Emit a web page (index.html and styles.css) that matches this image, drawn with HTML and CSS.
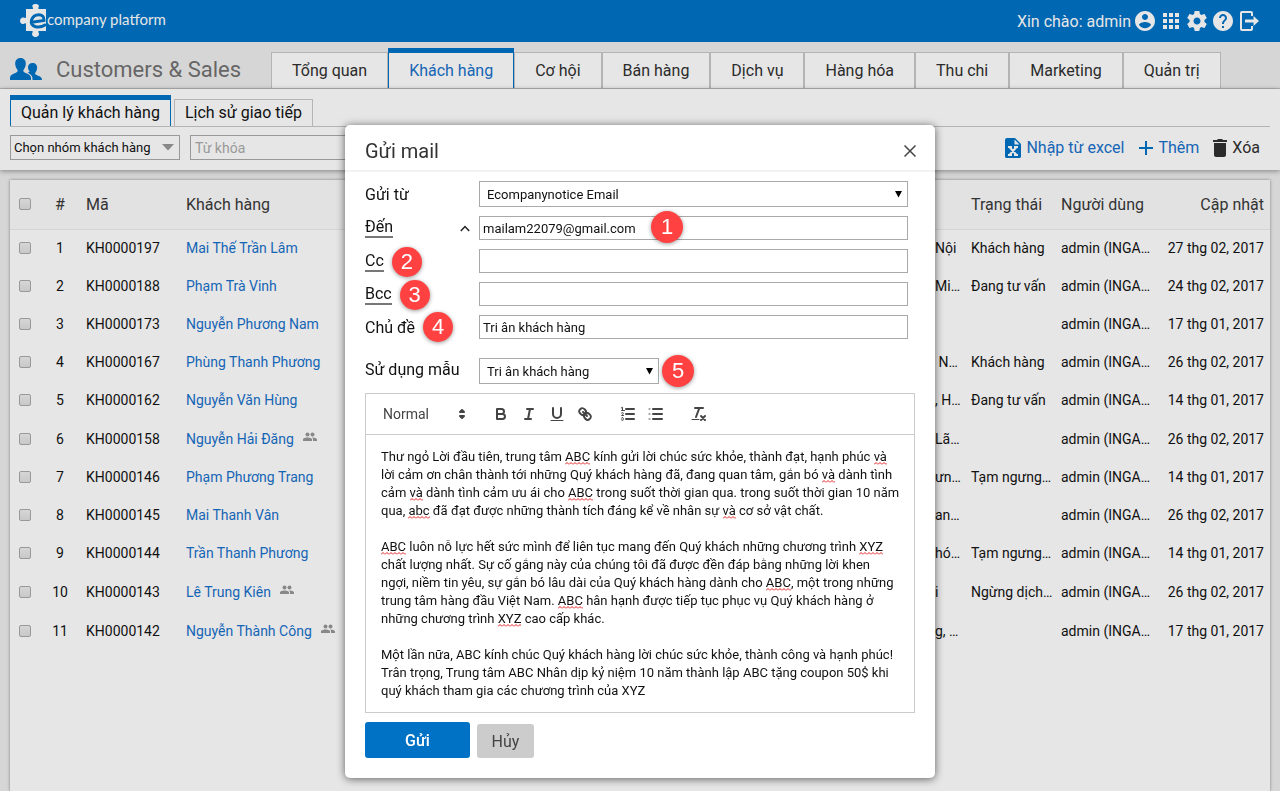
FILE: index.html
```html
<!DOCTYPE html>
<html lang="vi">
<head>
    <meta charset="UTF-8" />
    <meta name="viewport" content="width=device-width, initial-scale=1" />
    <title>Customers &amp; Sales</title>
    <link rel="stylesheet" href="styles.css">
</head>
<body>
<header class="topbar">
  <a class="logo" href="#">
    <svg width="27" height="34" viewBox="0 0 27 34">
      <path fill="#e6e6e6" d="M6 5h6.500c.8 0 .8-.8.300-1.500C11.500 1.500 13 0 15.500 0s4.300 1.500 3 3.500c-.5.700-.4 1.500.4 1.500H26v22h-7c-.8 0-1 .800-.5 1.500 1.500 2-.3 4.500-3 4.500s-4.300-2.500-3-4.500c.5-.7.300-1.500-.5-1.500H6v-7c0-.8-.8-1-1.500-.5C2.500 21 0 19.500 0 16.800s2.500-4.200 4.500-3c.7.500 1.500.3 1.500-.5z"/>
      <path fill="none" stroke="#0067b3" stroke-width="3" d="M10 18.500l14-2C24.500 8.500 14 9 11.500 16 10 23.500 19 25 26 20.500"/>
    </svg>
    <span>company platform</span>
  </a>
  <div class="user-menu">
    <span>Xin chào: admin</span>
    <button type="button" aria-label="Tài khoản">
      <svg width="24" height="24" viewBox="0 0 24 24"><path d="M12 2C6.480 2 2 6.480 2 12s4.480 10 10 10 10-4.480 10-10S17.520 2 12 2zm0 3c1.660 0 3 1.340 3 3s-1.340 3-3 3-3-1.340-3-3 1.340-3 3-3zm0 14.200c-2.500 0-4.710-1.280-6-3.220.03-1.990 4-3.080 6-3.080 1.990 0 5.970 1.090 6 3.080-1.290 1.940-3.500 3.220-6 3.220z"/></svg>
    </button>
    <button type="button" aria-label="Ứng dụng">
      <svg width="24" height="24" viewBox="0 0 24 24"><path d="M4 8h4V4H4v4zm6 12h4v-4h-4v4zm-6 0h4v-4H4v4zm0-6h4v-4H4v4zm6 0h4v-4h-4v4zm6-10v4h4V4h-4zm-6 4h4V4h-4v4zm6 6h4v-4h-4v4zm0 6h4v-4h-4v4z"/></svg>
    </button>
    <button type="button" aria-label="Cài đặt">
      <svg width="24" height="24" viewBox="0 0 24 24"><path d="M19.430 12.980c.04-.32.070-.64.070-.98s-.03-.66-.07-.98l2.110-1.650c.19-.15.240-.42.120-.64l-2-3.460c-.12-.22-.39-.3-.61-.22l-2.490 1c-.52-.4-1.080-.73-1.690-.98l-.38-2.650C14.460 2.180 14.250 2 14 2h-4c-.25 0-.46.180-.49.420l-.38 2.650c-.61.250-1.170.590-1.690.980l-2.490-1c-.23-.09-.49 0-.61.220l-2 3.460c-.13.220-.07.490.12.640l2.110 1.650c-.04.320-.07.650-.07.980s.03.660.070.980l-2.110 1.650c-.19.150-.24.420-.12.640l2 3.460c.12.220.39.300.61.220l2.490-1c.52.400 1.080.730 1.690.980l.38 2.650c.03.240.24.420.49.420h4c.25 0 .46-.18.490-.42l.38-2.650c.61-.25 1.170-.59 1.690-.98l2.490 1c.23.090.49 0 .61-.22l2-3.460c.12-.22.070-.49-.12-.64l-2.110-1.650zM12 15.500c-1.930 0-3.500-1.570-3.500-3.500s1.570-3.500 3.500-3.500 3.500 1.570 3.500 3.500-1.570 3.500-3.500 3.500z"/></svg>
    </button>
    <button type="button" aria-label="Trợ giúp">
      <svg width="24" height="24" viewBox="0 0 24 24"><path d="M12 2C6.480 2 2 6.480 2 12s4.480 10 10 10 10-4.480 10-10S17.520 2 12 2zm1 17h-2v-2h2v2zm2.070-7.750l-.9.920C13.450 12.900 13 13.500 13 15h-2v-.5c0-1.100.45-2.100 1.170-2.830l1.240-1.260c.37-.36.590-.86.590-1.410 0-1.100-.9-2-2-2s-2 .9-2 2H8c0-2.210 1.790-4 4-4s4 1.790 4 4c0 .88-.36 1.680-.93 2.250z"/></svg>
    </button>
    <button type="button" aria-label="Đăng xuất">
      <svg width="24" height="24" viewBox="0 0 24 24"><path fill="none" stroke="#e6e6e6" stroke-width="2" d="M15 7V4c0-.6-.4-1-1-1H5c-.6 0-1 .4-1 1v16c0 .6.400 1 1 1h9c.6 0 1-.4 1-1v-3"/><path d="M8 10.500h8.500V7L22 12l-5.500 5v-3.500H8z"/></svg>
    </button>
  </div>
</header>

<nav class="modules">
  <div class="module-title">
    <svg width="32" height="22" viewBox="0 0 32 22"><path d="M10.500 0c3.500 0 5.500 2.500 5.300 6-.2 2.800-1.300 4.600-2.300 6-.6 1 0 2 1.500 2.700 3.500 1.600 6 2.300 6 5.300v2H0v-2c0-3 2.500-3.700 6-5.300C7.500 14 8.100 13 7.500 12c-1-1.400-2.100-3.200-2.300-6C5 2.500 7 0 10.500 0z"/><path d="M22.500 5c3 0 4.800 2 4.600 5-.1 2.200-1 3.600-1.800 4.700-.6.900-.1 1.600 1.200 2.200 3 1.300 5.500 1.800 5.500 5.100h-9.500c.3-4-1.500-5.600-4.800-7.200 1.400-.6 2-.9 1.700-1.500-.8-1.200-1.400-2.300-1.400-3.800C17.900 7 19.700 5 22.500 5z"/></svg>
    <span>Customers &amp; Sales</span>
  </div>
  <div class="tabs">
    <a href="#">Tổng quan</a>
    <a href="#" class="active">Khách hàng</a>
    <a href="#">Cơ hội</a>
    <a href="#">Bán hàng</a>
    <a href="#">Dịch vụ</a>
    <a href="#">Hàng hóa</a>
    <a href="#">Thu chi</a>
    <a href="#">Marketing</a>
    <a href="#">Quản trị</a>
  </div>
</nav>

<section class="panel">
  <div class="subtabs">
    <a href="#" class="active">Quản lý khách hàng</a>
    <a href="#">Lịch sử giao tiếp</a>
  </div>
  <div class="filters">
    <div class="select-wrap group">
      <select aria-label="Nhóm khách hàng"><option>Chọn nhóm khách hàng</option></select>
      <svg width="12" height="7" viewBox="0 0 12 7"><path fill="#888" d="M0 0h12L6 6.500z"/></svg>
    </div>
    <input class="keyword" type="text" placeholder="Từ khóa" aria-label="Từ khóa">
    <div class="actions">
      <button type="button">
        <svg width="18" height="20" viewBox="0 0 18 20"><path fill="#0067b3" d="M3 0h8l6 6v12.500c0 .8-.7 1.500-1.500 1.500h-13C1.700 20 1 19.300 1 18.500V2c0-1.100.9-2 2-2z"/><path fill="#e6e6e6" d="M10.500 1.500v5h5z"/><path fill="none" stroke="#e6e6e6" stroke-width="2" d="M5.500 9l7 8M12.500 9l-7 8M4 9h4M10 9h4M4 17h4M10 17h4"/></svg>
        Nhập từ excel
      </button>
      <button type="button" class="add">
        <svg width="16" height="16" viewBox="0 0 16 16"><path stroke="#0067b3" stroke-width="2" d="M8 1v14M1 8h14"/></svg>
        Thêm
      </button>
      <button type="button" class="delete">
        <svg width="15" height="18" viewBox="0 0 15 18"><path fill="#2b2b2b" d="M1 4h12v12c0 1.100-.9 2-2 2H3c-1.100 0-2-.9-2-2zM0 1h4l1-1h4l1 1h4v2H0z"/></svg>
        Xóa
      </button>
    </div>
  </div>
</section>

<main class="card">
  <table>
    <colgroup>
      <col class="c-check"><col class="c-num"><col class="c-code"><col><col class="c-address"><col class="c-status"><col class="c-user"><col class="c-date">
    </colgroup>
    <thead>
      <tr><th><input type="checkbox" aria-label="Chọn tất cả"></th><th class="num">#</th><th>Mã</th><th>Khách hàng</th><th></th><th>Trạng thái</th><th>Người dùng</th><th class="date">Cập nhật</th></tr>
    </thead>
    <tbody>
      <tr><td><input type="checkbox" aria-label="KH0000197"></td><td class="num">1</td><td>KH0000197</td><td><a href="#">Mai Thế Trần Lâm</a></td><td>Nội</td><td>Khách hàng</td><td>admin (INGA…</td><td class="date">27 thg 02, 2017</td></tr>
      <tr><td><input type="checkbox" aria-label="KH0000188"></td><td class="num">2</td><td>KH0000188</td><td><a href="#">Phạm Trà Vinh</a></td><td>Mi…</td><td>Đang tư vấn</td><td>admin (INGA…</td><td class="date">24 thg 02, 2017</td></tr>
      <tr><td><input type="checkbox" aria-label="KH0000173"></td><td class="num">3</td><td>KH0000173</td><td><a href="#">Nguyễn Phương Nam</a></td><td></td><td></td><td>admin (INGA…</td><td class="date">17 thg 01, 2017</td></tr>
      <tr><td><input type="checkbox" aria-label="KH0000167"></td><td class="num">4</td><td>KH0000167</td><td><a href="#">Phùng Thanh Phương</a></td><td>&nbsp;N…</td><td>Khách hàng</td><td>admin (INGA…</td><td class="date">26 thg 02, 2017</td></tr>
      <tr><td><input type="checkbox" aria-label="KH0000162"></td><td class="num">5</td><td>KH0000162</td><td><a href="#">Nguyễn Văn Hùng</a></td><td>, H…</td><td>Đang tư vấn</td><td>admin (INGA…</td><td class="date">14 thg 01, 2017</td></tr>
      <tr class="shared"><td><input type="checkbox" aria-label="KH0000158"></td><td class="num">6</td><td>KH0000158</td><td><a href="#">Nguyễn Hải Đăng</a><svg class="people" width="14" height="10" viewBox="0 0 14 10"><circle cx="4.500" cy="2.500" r="2"/><circle cx="9.500" cy="2.500" r="2"/><path d="M0 9V7.500C0 6 3 5.500 4.500 5.500S9 6 9 7.500V9zM10 9V7.500c0-.8-.3-1.300-.8-1.900C11 5.400 14 6.200 14 7.500V9z"/></svg></td><td>Lã…</td><td></td><td>admin (INGA…</td><td class="date">26 thg 02, 2017</td></tr>
      <tr><td><input type="checkbox" aria-label="KH0000146"></td><td class="num">7</td><td>KH0000146</td><td><a href="#">Phạm Phương Trang</a></td><td>ưn…</td><td>Tạm ngưng…</td><td>admin (INGA…</td><td class="date">14 thg 01, 2017</td></tr>
      <tr><td><input type="checkbox" aria-label="KH0000145"></td><td class="num">8</td><td>KH0000145</td><td><a href="#">Mai Thanh Vân</a></td><td>an…</td><td></td><td>admin (INGA…</td><td class="date">26 thg 02, 2017</td></tr>
      <tr><td><input type="checkbox" aria-label="KH0000144"></td><td class="num">9</td><td>KH0000144</td><td><a href="#">Trần Thanh Phương</a></td><td>hó…</td><td>Tạm ngưng…</td><td>admin (INGA…</td><td class="date">14 thg 01, 2017</td></tr>
      <tr class="shared"><td><input type="checkbox" aria-label="KH0000143"></td><td class="num">10</td><td>KH0000143</td><td><a href="#">Lê Trung Kiên</a><svg class="people" width="14" height="10" viewBox="0 0 14 10"><circle cx="4.500" cy="2.500" r="2"/><circle cx="9.500" cy="2.500" r="2"/><path d="M0 9V7.500C0 6 3 5.500 4.500 5.500S9 6 9 7.500V9zM10 9V7.500c0-.8-.3-1.300-.8-1.900C11 5.400 14 6.200 14 7.500V9z"/></svg></td><td>i</td><td>Ngừng dịch…</td><td>admin (INGA…</td><td class="date">26 thg 02, 2017</td></tr>
      <tr class="shared"><td><input type="checkbox" aria-label="KH0000142"></td><td class="num">11</td><td>KH0000142</td><td><a href="#">Nguyễn Thành Công</a><svg class="people" width="14" height="10" viewBox="0 0 14 10"><circle cx="4.500" cy="2.500" r="2"/><circle cx="9.500" cy="2.500" r="2"/><path d="M0 9V7.500C0 6 3 5.500 4.500 5.500S9 6 9 7.500V9zM10 9V7.500c0-.8-.3-1.300-.8-1.900C11 5.400 14 6.200 14 7.500V9z"/></svg></td><td>g, …</td><td></td><td>admin (INGA…</td><td class="date">17 thg 01, 2017</td></tr>
    </tbody>
  </table>
</main>

<div class="overlay">
  <form class="modal" role="dialog" aria-labelledby="mailTitle">
    <div class="modal-header">
      <h2 id="mailTitle">Gửi mail</h2>
      <button type="button" class="close" aria-label="Đóng">
        <svg width="12" height="12" viewBox="0 0 12 12"><path stroke="#444" stroke-width="1.500" d="M.5.500l11 11M11.500.500l-11 11"/></svg>
      </button>
    </div>
    <div class="modal-body">
      <div class="field">
        <div class="caption"><label for="from">Gửi từ</label></div>
        <div class="select-wrap">
          <select id="from"><option>Ecompanynotice Email</option></select>
          <svg width="7" height="7" viewBox="0 0 7 7"><path d="M0 0h7L3.500 6.500z"/></svg>
        </div>
      </div>
      <div class="field">
        <div class="caption">
          <label class="link" for="to">Đến</label>
          <button type="button" class="toggle" aria-label="Thu gọn"><svg width="10" height="7" viewBox="0 0 10 7"><path fill="none" stroke="#222" stroke-width="1.500" d="M.8 6L5 1.500 9.200 6"/></svg></button>
        </div>
        <div class="control">
          <input type="text" id="to" value="mailam22079@gmail.com">
          <span class="badge badge-over">1</span>
        </div>
      </div>
      <div class="field">
        <div class="caption copy"><label class="link" for="cc">Cc</label><span class="badge">2</span></div>
        <input type="text" id="cc">
      </div>
      <div class="field">
        <div class="caption copy"><label class="link" for="bcc">Bcc</label><span class="badge">3</span></div>
        <input type="text" id="bcc">
      </div>
      <div class="field">
        <div class="caption"><label for="subject">Chủ đề</label><span class="badge">4</span></div>
        <input type="text" id="subject" value="Tri ân khách hàng">
      </div>
      <div class="field template">
        <div class="caption"><label for="template">Sử dụng mẫu</label></div>
        <div class="select-wrap">
          <select id="template"><option>Tri ân khách hàng</option></select>
          <svg width="7" height="7" viewBox="0 0 7 7"><path d="M0 0h7L3.500 6.500z"/></svg>
        </div>
        <span class="badge">5</span>
      </div>

      <div class="editor">
        <div class="toolbar">
          <div class="select-wrap">
            <select aria-label="Kiểu chữ"><option>Normal</option></select>
            <svg width="18" height="18" viewBox="0 0 18 18"><path class="both" d="M7 11l2 2 2-2zM7 7l2-2 2 2z"/></svg>
          </div>
          <div class="formats">
            <button type="button" aria-label="Đậm"><svg width="18" height="18" viewBox="0 0 18 18"><path d="M5 4h4.500a2.500 2.500 0 0 1 0 5H5zM5 9h5.500a2.500 2.500 0 0 1 0 5H5z"/></svg></button>
            <button type="button" aria-label="Nghiêng"><svg width="18" height="18" viewBox="0 0 18 18"><path d="M7 4h6M5 14h6M8 14l2-10"/></svg></button>
            <button type="button" aria-label="Gạch chân"><svg width="18" height="18" viewBox="0 0 18 18"><path d="M5 3v6a4 4 0 0 0 8 0V3"/><path class="thin" d="M3 15.500h12"/></svg></button>
            <button type="button" aria-label="Liên kết"><svg width="18" height="18" viewBox="0 0 18 18"><path d="M7 7l4 4M8.900 4.577a3.476 3.476 0 0 1 .36 4.679A3.476 3.476 0 0 1 4.577 8.900C3.185 7.500 2.035 6.400 4.217 4.217S7.500 3.185 8.900 4.577zM13.423 9.100a3.476 3.476 0 0 0-4.679-.36 3.476 3.476 0 0 0 .36 4.679c1.392 1.392 2.500 2.542 4.679.36S14.815 10.500 13.423 9.100z"/></svg></button>
          </div>
          <div class="formats">
            <button type="button" aria-label="Danh sách số"><svg width="18" height="18" viewBox="0 0 18 18"><path d="M7 4h8M7 9h8M7 14h8"/><path class="thin" d="M2.500 5.500h3M2.300 2.900l1.200-.6v3M4.500 10.500h-2c0-.234 1.850-1.076 1.850-2.234A.959.959 0 0 0 2.500 8.156M2.500 14.846a.959.959 0 0 0 1.850-.109A.7.700 0 0 0 3.750 14a.688.688 0 0 0 .6-.736.959.959 0 0 0-1.850-.109"/></svg></button>
            <button type="button" aria-label="Danh sách"><svg width="18" height="18" viewBox="0 0 18 18"><path d="M6 4h9M6 9h9M6 14h9"/><path class="thin" d="M2 4h1M2 9h1M2 14h1"/></svg></button>
          </div>
          <div class="formats">
            <button type="button" aria-label="Xóa định dạng"><svg width="18" height="18" viewBox="0 0 18 18"><path d="M5 3h8M6 12l3.350-9M11 11l4 4M15 11l-4 4"/><path class="thin" d="M2 14.500h7"/></svg></button>
          </div>
        </div>
        <div class="content" contenteditable="true" spellcheck="false">
          <p>Thư ngỏ Lời đầu tiên, trung tâm <u>ABC</u> kính gửi lời chúc sức khỏe, thành đạt, hạnh phúc <u>và</u> lời cảm ơn chân thành tới những Quý khách hàng đã, đang quan tâm, gắn bó <u>và</u> dành tình cảm <u>và</u> dành tình cảm ưu ái cho <u>ABC</u> trong suốt thời gian qua. trong suốt thời gian 10 năm qua, <u>abc</u> đã đạt được những thành tích đáng kể về nhân sự <u>và</u> cơ sở vật chất.</p>
          <p><u>ABC</u> luôn nỗ lực hết sức mình để liên tục mang đến Quý khách những chương trình <u>XYZ</u> chất lượng nhất. Sự cố gắng này của chúng tôi đã được đền đáp bằng những lời khen ngợi, niềm tin yêu, sự gắn bó lâu dài của Quý khách hàng dành cho <u>ABC</u>, một trong những trung tâm hàng đầu Việt Nam. <u>ABC</u> hân hạnh được tiếp tục phục vụ Quý khách hàng ở những chương trình <u>XYZ</u> cao cấp khác.</p>
          <p>Một lần nữa, ABC kính chúc Quý khách hàng lời chúc sức khỏe, thành công và hạnh phúc! Trân trọng, Trung tâm ABC Nhân dịp kỷ niệm 10 năm thành lập ABC tặng coupon 50$ khi quý khách tham gia các chương trình của XYZ</p>
        </div>
      </div>

      <div class="buttons">
        <button type="submit" class="send">Gửi</button>
        <button type="button" class="cancel">Hủy</button>
      </div>
    </div>
  </form>
</div>
</body>
</html>
```
FILE: styles.css
```css
* {
    box-sizing: border-box;
}
body {
    margin: 0;
    height: 100vh;
    display: flex;
    flex-direction: column;
    overflow: hidden;
    background-color: #d6d6d6;
    color: #111;
    font-family: Roboto, "Liberation Sans", sans-serif;
    font-size: 14px;
}
a {
    color: #1565b5;
    text-decoration: none;
}
button {
    padding: 0;
    border: none;
    background: none;
    font-family: inherit;
}
input, select {
    font-family: inherit;
    font-size: 13px;
    color: #111;
}
svg {
    display: block;
    flex: none;
}

/* top bar */
.topbar {
    display: flex;
    align-items: center;
    justify-content: space-between;
    height: 42px;
    padding: 0 19px 0 20px;
    background-color: #0067b3;
    color: #e6e6e6;
    font-size: 16px;
}
.logo {
    display: flex;
    align-items: center;
    color: #e6e6e6;
    font-family: Lato, sans-serif;
    font-size: 15px;
}
.logo span {
    padding-bottom: 4px;
}
.user-menu {
    display: flex;
    align-items: center;
    gap: 2px;
    fill: #e6e6e6;
}

/* module tabs */
.modules {
    display: flex;
    align-items: flex-end;
    height: 47px;
    border-bottom: 1px solid #b4b4b4;
}
.module-title {
    display: flex;
    align-items: center;
    gap: 14px;
    width: 271px;
    height: 38px;
    padding-left: 10px;
    fill: #0067b3;
    color: #666;
    font-size: 22px;
}
.tabs {
    display: flex;
    align-items: flex-end;
}
.tabs a {
    padding: 0 20px;
    border: 1px solid #b4b4b4;
    border-bottom: none;
    background-color: #e6e6e6;
    color: #2b2b2b;
    font-size: 16px;
    line-height: 35px;
}
.tabs .active {
    border-color: #0067b3;
    border-top-width: 5px;
    color: #1565b5;
}

/* filter panel */
.panel {
    padding: 6px 10px 10px;
    background-color: #e6e6e6;
    box-shadow: 0 1px 5px rgba(0, 0, 0, 0.4);
}
.subtabs {
    display: flex;
    align-items: flex-end;
    gap: 3px;
    border-bottom: 1px solid #b4b4b4;
}
.subtabs a {
    padding: 0 10px;
    border: 1px solid #b4b4b4;
    border-bottom: none;
    color: #111;
    font-size: 16px;
    line-height: 26px;
}
.subtabs .active {
    border-color: #0067b3;
    border-top-width: 5px;
}
.filters {
    display: flex;
    align-items: center;
    gap: 10px;
    padding-top: 8px;
}
.select-wrap {
    display: grid;
    align-items: center;
}
.select-wrap select, .select-wrap svg {
    grid-area: 1 / 1;
}
.select-wrap select {
    width: 100%;
    height: 26px;
    padding: 0 7px;
    border: 1px solid #a9a9a9;
    border-radius: 0;
    background: none;
    appearance: none;
}
.select-wrap svg {
    justify-self: end;
    margin-right: 6px;
    pointer-events: none;
}
.group {
    width: 170px;
}
.group select {
    height: 25px;
    padding: 0 3px;
    border-color: #999;
}
.keyword {
    width: 200px;
    height: 25px;
    padding: 0 4px;
    border: 1px solid #999;
    background: none;
    font-size: 14px;
}
.keyword::placeholder {
    color: #999;
}
.actions {
    display: flex;
    gap: 14px;
    margin-left: auto;
}
.actions button {
    display: flex;
    align-items: center;
    gap: 4px;
    color: #1565b5;
    font-size: 16px;
}
.actions .delete {
    padding-right: 10px;
    color: #2b2b2b;
}

/* customer table */
.card {
    flex: 1;
    margin: 10px 10px 0;
    background-color: #e6e6e6;
    box-shadow: 0 0 3px rgba(0, 0, 0, 0.4);
}
table {
    width: 100%;
    table-layout: fixed;
    border-collapse: collapse;
}
.c-check {
    width: 30px;
}
.c-num {
    width: 40px;
}
.c-code {
    width: 100px;
}
.c-address {
    width: 36px;
}
.c-status {
    width: 90px;
}
.c-user {
    width: 100px;
}
.c-date {
    width: 115px;
}
th, td {
    padding: 0 6px;
    text-align: left;
    white-space: nowrap;
}
th {
    height: 49px;
    border-bottom: 1px solid #d4d4d4;
    background-color: #e2e2e2;
    color: #333;
    font-size: 16px;
    font-weight: normal;
}
td {
    height: 38px;
}
.shared td {
    height: 39px;
}
.num {
    text-align: center;
}
.date {
    text-align: right;
}
input[type="checkbox"] {
    display: block;
    width: 12px;
    height: 12px;
    margin: 0 3px;
    border: 1px solid #999;
    border-radius: 2px;
    background: linear-gradient(#d6d6d6, #c8c8c8);
    appearance: none;
}
.people {
    display: inline-block;
    margin-left: 9px;
    vertical-align: 2px;
    fill: #888;
}

/* mail dialog */
.overlay {
    position: fixed;
    inset: 0;
    display: flex;
    align-items: flex-start;
    justify-content: center;
    padding-top: 125px;
}
.modal {
    width: 590px;
    max-width: 100%;
    border-radius: 5px;
    background-color: #fff;
    box-shadow: 0 1px 8px rgba(0, 0, 0, 0.6);
}
.modal-header {
    display: flex;
    align-items: center;
    justify-content: space-between;
    height: 47px;
    padding: 6px 19px 0 20px;
    border-bottom: 2px solid #f2f2f2;
}
h2 {
    margin: 0;
    color: #333;
    font-size: 20px;
    font-weight: normal;
}
.modal-body {
    padding: 9px 20px 20px;
}
.field {
    display: flex;
    align-items: center;
    margin: 0 7px 9px 0;
}
.caption {
    display: flex;
    align-items: center;
    gap: 8px;
    width: 114px;
    flex: none;
    font-size: 16px;
}
.copy {
    height: 24px;
    padding-top: 2px;
}
.link {
    border-bottom: 2px solid #777;
    line-height: 18px;
}
.toggle {
    margin: 0 9px 0 auto;
}
.field > .select-wrap, .control, .field > input {
    flex: 1;
}
.control {
    position: relative;
}
.field input {
    display: block;
    width: 100%;
    min-width: 0;
    height: 24px;
    padding: 0 3px;
    border: 1px solid #a9a9a9;
}
.template {
    margin-top: 19px;
}
.template .caption {
    padding-bottom: 4px;
}
.template > .select-wrap {
    flex: none;
    width: 180px;
}
.badge {
    width: 30px;
    height: 30px;
    margin: -3px 0;
    border-radius: 50%;
    background-color: #ff4141;
    box-shadow: 0 1px 4px rgba(0, 0, 0, 0.4);
    color: #fff;
    font-family: "Liberation Sans", Arial, sans-serif;
    font-size: 22px;
    line-height: 30px;
    text-align: center;
}
.badge-over {
    position: absolute;
    top: -2px;
    left: 172px;
}
.badge-over, .template .badge {
    width: 32px;
    height: 32px;
    line-height: 32px;
}
.template .badge {
    margin-left: 3px;
}

/* rich text editor */
.editor {
    border: 1px solid #ccc;
}
.toolbar {
    display: flex;
    align-items: center;
    gap: 15px;
    height: 41px;
    padding: 0 8px;
    border-bottom: 1px solid #ccc;
}
.toolbar svg {
    fill: none;
    stroke: #444;
    stroke-width: 2;
    stroke-linecap: round;
    stroke-linejoin: round;
}
.toolbar .thin {
    stroke-width: 1;
}
.toolbar .both {
    fill: #444;
}
.toolbar .select-wrap {
    width: 98px;
}
.toolbar .select-wrap svg {
    margin-right: 1px;
}
.toolbar select {
    padding: 0 9px;
    border: none;
    color: #444;
    font-size: 14px;
}
.formats {
    display: flex;
}
.formats button {
    padding: 3px 5px;
}
.content {
    padding: 13px 14px 12px 15px;
    font-size: 13px;
    line-height: 18px;
}
.content p {
    margin: 0 0 18px;
}
.content p:last-child {
    margin: 0;
}
/* spell-check squiggle */
.content u {
    padding-bottom: 1px;
    background: url("data:image/svg+xml,%3Csvg xmlns='http://www.w3.org/2000/svg' width='4' height='3'%3E%3Cpath d='M0 2.500L2 .5l2 2' fill='none' stroke='%23e02020'/%3E%3C/svg%3E") repeat-x left bottom;
    text-decoration: none;
}
.buttons {
    display: flex;
    align-items: flex-end;
    gap: 7px;
    margin-top: 9px;
}
.buttons button {
    border-radius: 3px;
    font-size: 16px;
}
.send {
    width: 105px;
    height: 36px;
    background-color: #0072c6;
    color: #fff;
    font-weight: 500;
}
.cancel {
    width: 57px;
    height: 34px;
    background-color: #ccc;
    color: #444;
}
```
